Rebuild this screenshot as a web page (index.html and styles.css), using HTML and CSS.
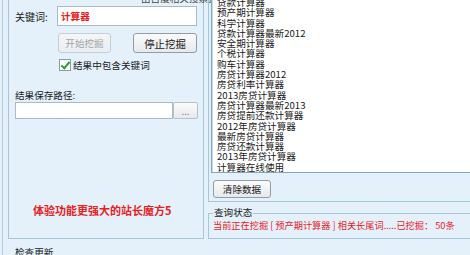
FILE: index.html
```html
<!DOCTYPE html>
<html lang="zh-CN">
<head>
<meta charset="UTF-8">
<title>长尾词挖掘</title>
<link rel="stylesheet" href="styles.css">
</head>
<body>

<div class="window">
  <div class="left">
    <div class="group group-left">
      <div class="cut-title">由百度相关搜索提供</div>
      <div class="row row-keyword">
        <span class="label">关键词:</span>
        <div class="input input-keyword">计算器</div>
      </div>
      <div class="row row-buttons">
        <button class="btn btn-start" disabled>开始挖掘</button>
        <button class="btn btn-stop">停止挖掘</button>
      </div>
      <div class="row row-check">
        <span class="checkbox checked"></span>
        <span>结果中包含关键词</span>
      </div>
      <div class="path-label">结果保存路径:</div>
      <div class="row row-path">
        <div class="input input-path"></div>
        <button class="btn btn-browse">...</button>
      </div>
      <div class="promo">体验功能更强大的站长魔方5</div>
    </div>
    <div class="update">检查更新</div>
  </div>

  <div class="right">
    <div class="group group-result">
      <ul class="list">
        <li>贷款计算器</li>
        <li>预产期计算器</li>
        <li>科学计算器</li>
        <li>贷款计算器最新2012</li>
        <li>安全期计算器</li>
        <li>个税计算器</li>
        <li>购车计算器</li>
        <li>房贷计算器2012</li>
        <li>房贷利率计算器</li>
        <li>2013房贷计算器</li>
        <li>房贷计算器最新2013</li>
        <li>房贷提前还款计算器</li>
        <li>2012年房贷计算器</li>
        <li>最新房贷计算器</li>
        <li>房贷还款计算器</li>
        <li>2013年房贷计算器</li>
        <li>计算器在线使用</li>
      </ul>
      <button class="btn btn-clear">清除数据</button>
    </div>
    <div class="group group-status">
      <span class="legend">查询状态</span>
      <div class="status">当前正在挖掘 [ 预产期计算器 ] 相关长尾词.....已挖掘： 50条</div>
    </div>
  </div>
</div>

</body>
</html>
```

FILE: styles.css
```css
body {
  margin: 0;
  font-family: "Noto Sans CJK SC", "Liberation Sans", sans-serif;
  font-size: 9.6px;
  color: #1a1a1a;
  background-color: #e4f1fa;
}

.window {
  display: flex;
  width: 470px;
  height: 255px;
  overflow: hidden;
  padding-left: 2px;
  box-sizing: border-box;
  background-color: #e4f1fa;
}

.left {
  flex: none;
  width: 202px;
  padding-left: 5px;
  border-left: 1px solid #b3cad8;
  box-sizing: border-box;
}

.group {
  display: flow-root;
  border: 1px solid #a6c6d8;
  border-top: none;
  box-sizing: border-box;
}

.group-left {
  width: 196px;
  height: 239px;
  padding-left: 6px;
}

.cut-title {
  margin: -8px 0 0 126px;
  height: 12px;
  line-height: 12px;
  color: #444;
  white-space: nowrap;
}

.row {
  display: flex;
  align-items: center;
}

.row-keyword {
  margin-top: 2px;
}

.label {
  width: 42px;
  font-size: 10px;
}

.input {
  background-color: #fff;
  border: 1px solid #a9b9c6;
  box-sizing: border-box;
}

.input-keyword {
  width: 140px;
  height: 20px;
  line-height: 18px;
  padding-left: 3px;
  color: #e8191b;
  font-weight: bold;
}

.btn {
  font-family: inherit;
  font-size: 9.6px;
  padding: 0;
  color: #1a1a1a;
  background: linear-gradient(#fbfbfb, #e6e9ec);
  border: 1px solid #8e9ea9;
  border-radius: 3px;
  box-sizing: border-box;
}

.btn[disabled] {
  color: #a4a4a4;
  background: linear-gradient(#f4f6f7, #eaeef1);
  border-color: #c4ced6;
}

.row-buttons {
  margin-top: 7px;
}

.btn-start {
  width: 53px;
  height: 20px;
  margin-left: 43px;
}

.btn-stop {
  width: 64px;
  height: 20px;
  margin-left: 22px;
  font-size: 10.4px;
}

.row-check {
  margin-top: 5px;
  height: 13px;
  gap: 2px;
}

.checkbox {
  width: 12px;
  height: 12px;
  margin-left: 44px;
  background-color: #fff;
  border: 1px solid #8c9ba6;
  box-sizing: border-box;
  position: relative;
}

.checkbox.checked::after {
  content: "";
  position: absolute;
  left: 3px;
  top: 0;
  width: 3px;
  height: 7px;
  border: solid #2e9b33;
  border-width: 0 2px 2px 0;
  transform: rotate(40deg);
}

.path-label {
  margin-top: 18px;
  line-height: 12px;
}

.row-path {
  margin-top: 1px;
}

.input-path {
  width: 158px;
  height: 17px;
}

.btn-browse {
  width: 25px;
  height: 17px;
  line-height: 10px;
  color: #666;
  border-color: #b5c2cc;
  border-radius: 2px;
}

.promo {
  margin: 84px 0 0 18px;
  line-height: 14px;
  font-size: 11px;
  font-weight: bold;
  color: #e8201e;
}

.update {
  margin: 7px 0 0 7px;
  line-height: 12px;
}

.right {
  flex: none;
  width: 300px;
  padding-left: 4px;
  box-sizing: border-box;
}

.group-result {
  padding: 0 0 3px 2px;
}

.list {
  list-style: none;
  margin: -3px 0 0;
  padding: 0 0 0 5px;
  background-color: #fff;
  border: 1px solid #80a8c6;
  border-top: none;
  border-right: none;
  box-shadow: inset 1px 0 0 #c4dbea;
}

.list li {
  height: 10.3px;
  line-height: 10.3px;
  white-space: nowrap;
}

.btn-clear {
  width: 58px;
  height: 18px;
  margin: 7px 0 0 2px;
  display: block;
}

.group-status {
  margin-top: 11px;
  height: 26px;
  border-top: 1px solid #a6c6d8;
}

.legend {
  display: block;
  width: fit-content;
  margin: -8px 0 0 4px;
  padding: 0 1px;
  line-height: 12px;
  background-color: #e4f1fa;
}

.status {
  margin: 1px 0 0 4px;
  line-height: 12px;
  font-size: 9.2px;
  color: #e8201e;
  white-space: nowrap;
}
```
